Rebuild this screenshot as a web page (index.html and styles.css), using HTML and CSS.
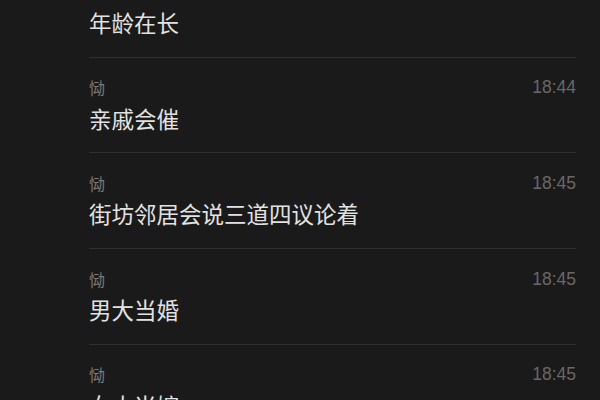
FILE: index.html
```html
<!DOCTYPE html>
<html lang="zh-CN">
<head>
<meta charset="utf-8">
<title>消息</title>
<link rel="stylesheet" href="styles.css">
</head>
<body>
<div class="list">
  <div class="row cont">
    <div class="msg">年龄在长</div>
  </div>
  <div class="row">
    <div class="head"><span class="name">恸</span><span class="time">18:44</span></div>
    <div class="msg">亲戚会催</div>
  </div>
  <div class="row">
    <div class="head"><span class="name">恸</span><span class="time">18:45</span></div>
    <div class="msg">街坊邻居会说三道四议论着</div>
  </div>
  <div class="row">
    <div class="head"><span class="name">恸</span><span class="time">18:45</span></div>
    <div class="msg">男大当婚</div>
  </div>
  <div class="row">
    <div class="head"><span class="name">恸</span><span class="time">18:45</span></div>
    <div class="msg">女大当嫁</div>
  </div>
</div>
</body>
</html>
```

FILE: styles.css
```css
html, body {
  margin: 0;
  padding: 0;
  background: #1a1a1a;
  height: 100%;
  overflow: hidden;
}
body {
  font-family: "Noto Sans CJK SC", "Noto Sans", sans-serif;
}
.list {
  padding-left: 89px;
  padding-right: 24px;
}
.row {
  padding-top: 19.5px;
  padding-bottom: 19.7px;
  border-bottom: 1px solid #303030;
}
.row.cont {
  padding-top: 7px;
}
.cont .msg {
  margin-top: 0;
}
.head {
  display: flex;
  justify-content: space-between;
  align-items: center;
  height: 20px;
}
.name {
  font-size: 16px;
  line-height: 20px;
  color: #7b7b7b;
}
.time {
  font-family: "Liberation Sans", Arial, sans-serif;
  font-size: 17.5px;
  line-height: 20px;
  color: #686868;
}
.msg {
  margin-top: 5.5px;
  font-size: 22.5px;
  line-height: 30px;
  color: #e2e2e2;
}
```
